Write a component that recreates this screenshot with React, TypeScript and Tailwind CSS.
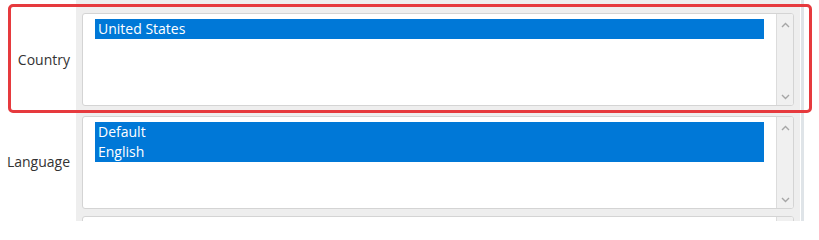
import React from "react"

function Chevron({ up }: { up?: boolean }) {
  return (
    <svg width="9" height="6" viewBox="0 0 9 6" className="block">
      <path
        d={up ? "M1 5 L4.5 1.5 L8 5" : "M1 1 L4.5 4.5 L8 1"}
        fill="none"
        stroke="#a6a6a6"
        strokeWidth="1.4"
      />
    </svg>
  )
}

function ListBox({ options }: { options: string[] }) {
  return (
    <div className="flex h-[93px] rounded-[3px] border border-[#d4d4d4] bg-white overflow-hidden">
      <div className="flex-1 pl-[12px] pr-[12px] pt-[5px]">
        {options.map((o) => (
          <div
            key={o}
            className="h-[20px] bg-[#0078d7] pl-[3px] text-[14px] leading-[20px] text-white"
          >
            {o}
          </div>
        ))}
      </div>
      <div className="flex w-[17px] flex-col items-center justify-between border-l border-[#dcdcdc] bg-[#f0f0f0] pt-[8px] pb-[5px]">
        <Chevron up />
        <Chevron />
      </div>
    </div>
  )
}

function Row({
  label,
  options,
  cell,
  labelPad,
}: {
  label: string
  options: string[]
  cell: string
  labelPad: string
}) {
  return (
    <div className="flex">
      <div
        className={`flex w-[76px] items-center justify-end pr-[6px] text-[14px] text-[#333333] ${labelPad}`}
      >
        {label}
      </div>
      <div className={`w-[724px] bg-[#eeeeee] px-[6px] ${cell}`}>
        <ListBox options={options} />
      </div>
      <div className="ml-[1px] w-[3px] self-stretch bg-[#dfe4e8]" />
    </div>
  )
}

export default function App() {
  return (
    <div
      className="relative h-[221px] w-[819px] overflow-hidden bg-white"
      style={{ fontFamily: '"Open Sans", "Liberation Sans", sans-serif' }}
    >
      <Row label="Country" options={["United States"]} cell="pt-[13px] pb-[10px]" labelPad="pt-[2px]" />
      <Row label="Language" options={["Default", "English"]} cell="pb-[7px]" labelPad="pb-[9px]" />
      <Row label="" options={[]} cell="" labelPad="" />
      <div className="pointer-events-none absolute left-[8px] top-[4px] h-[109px] w-[804px] rounded-[5px] border-[3px] border-[#e63a3e]" />
    </div>
  )
}
